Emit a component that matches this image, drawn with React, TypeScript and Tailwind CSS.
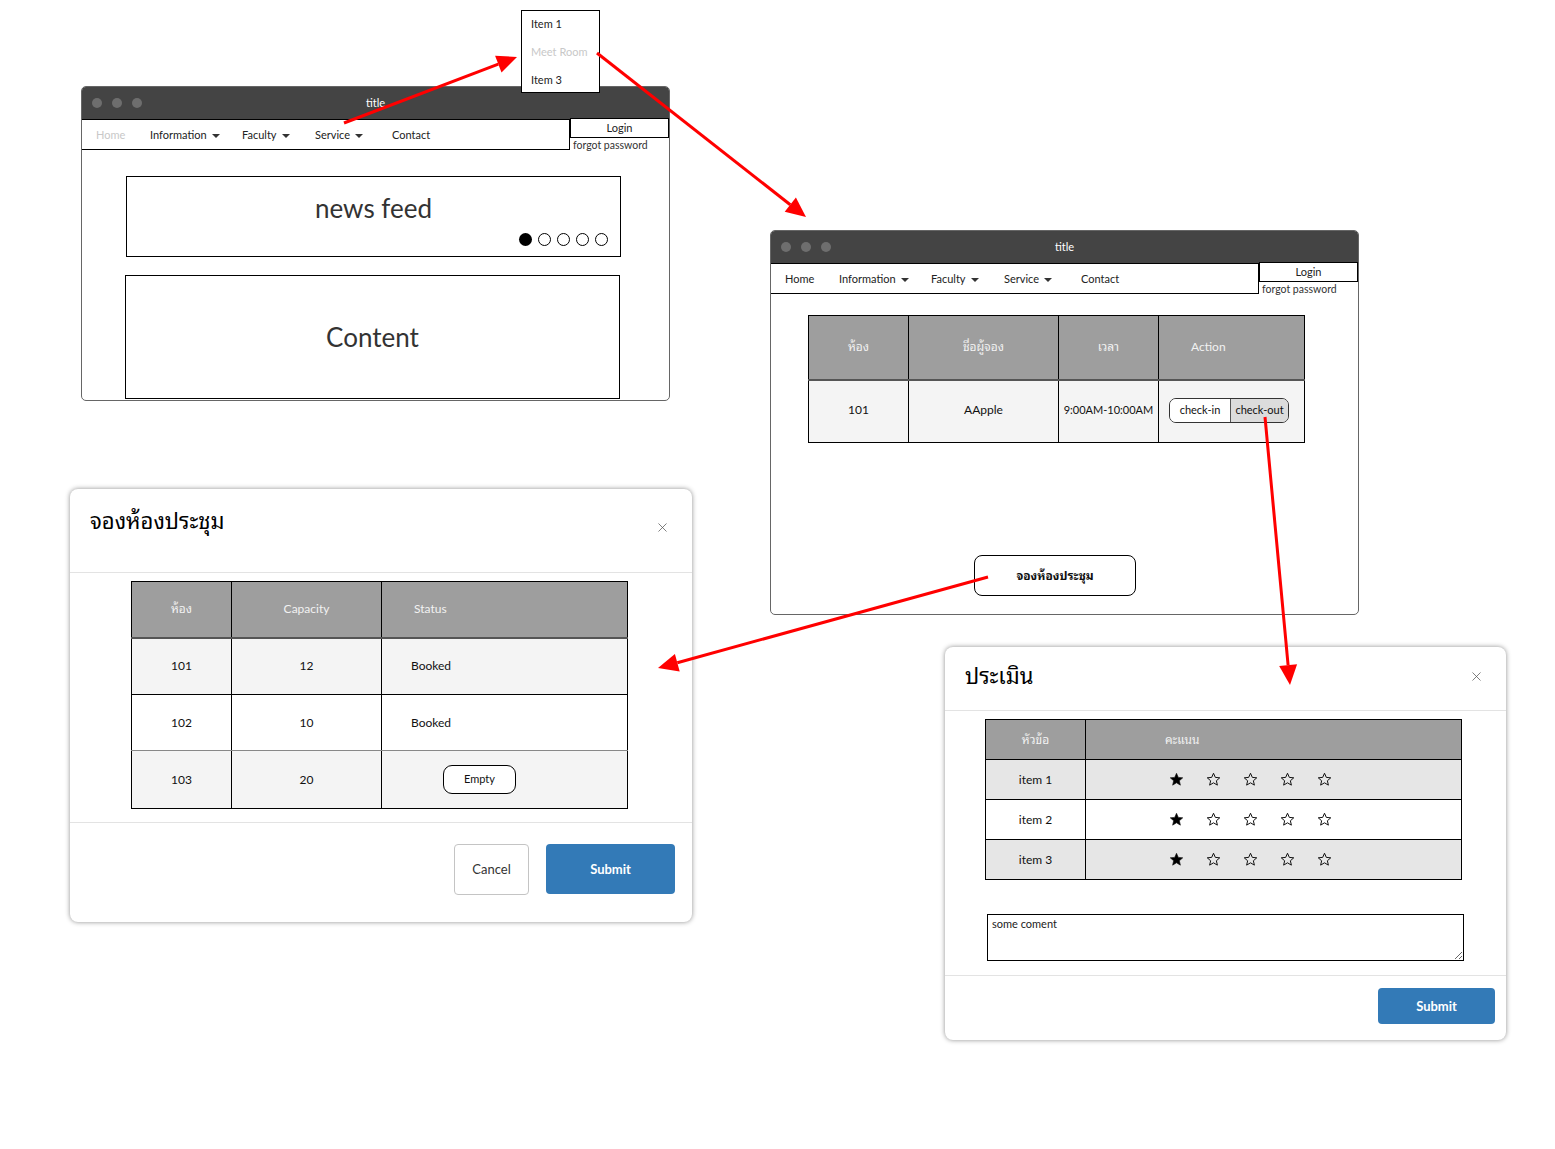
import React from "react";
import { X } from "lucide-react";

const Caret = () => (
  <span className="ml-[5px] inline-block h-0 w-0 border-x-[4px] border-t-[4px] border-x-transparent border-t-[#333] align-middle" />
);

function TitleBar() {
  return (
    <div className="grid h-[32px] shrink-0 grid-cols-[1fr_auto_1fr] items-center bg-[#444]">
      <div className="flex gap-[10px] pl-[10px]">
        <span className="h-[10px] w-[10px] rounded-full bg-[#6e6e6e]" />
        <span className="h-[10px] w-[10px] rounded-full bg-[#6e6e6e]" />
        <span className="h-[10px] w-[10px] rounded-full bg-[#6e6e6e]" />
      </div>
      <div className="text-[11px] text-white">title</div>
      <div />
    </div>
  );
}

function Nav({ homeGray }: { homeGray?: boolean }) {
  return (
    <div className="flex h-[31px] shrink-0">
      <div className="flex h-[31px] w-[488px] items-center border-y border-r border-black pl-[14px] pt-[1px] text-[11px] text-[#222]">
        <span className={"w-[54px] " + (homeGray ? "text-[#c8c8c8]" : "text-[#222]")}>Home</span>
        <span className="w-[92px]">
          Information
          <Caret />
        </span>
        <span className="w-[73px]">
          Faculty
          <Caret />
        </span>
        <span className="w-[77px]">
          Service
          <Caret />
        </span>
        <span>Contact</span>
      </div>
      <div className="-mt-[1px] flex h-[31px] w-[99px] flex-col">
        <div className="flex h-[20px] shrink-0 items-center justify-center border border-black text-[11px] text-[#222]">Login</div>
        <div className="shrink-0 whitespace-nowrap pl-[3px] text-[10.5px] leading-[15px] text-[#333]">forgot password</div>
      </div>
    </div>
  );
}

function Star({ filled }: { filled?: boolean }) {
  return (
    <svg width="15" height="15" viewBox="0 0 24 24">
      <polygon
        points="12,2 14.9,8.6 22,9.3 16.6,14 18.2,21 12,17.3 5.8,21 7.4,14 2,9.3 9.1,8.6"
        fill={filled ? "#000" : "none"}
        stroke="#111"
        strokeWidth={filled ? 1 : 1.6}
        strokeLinejoin="round"
      />
    </svg>
  );
}

function Modal({
  left,
  top,
  width,
  height,
  title,
  headerH,
  titlePt,
  xMt,
  children,
}: {
  left: string;
  top: string;
  width: string;
  height: string;
  title: string;
  headerH: string;
  titlePt: string;
  xMt: string;
  children: React.ReactNode;
}) {
  return (
    <div
      className={
        "absolute flex flex-col rounded-[8px] bg-white shadow-[0_0_5px_rgba(0,0,0,0.45)] " +
        left +
        " " +
        top +
        " " +
        width +
        " " +
        height
      }
    >
      <div className={"flex shrink-0 items-start justify-between border-b border-[#e3e3e3] pl-[20px] pr-[22px] " + headerH + " " + titlePt}>
        <div className="text-[22px] leading-[26px] text-black">{title}</div>
        <X size={15} strokeWidth={1.2} className={"text-[#555] " + xMt} />
      </div>
      {children}
    </div>
  );
}

export default function App() {
  return (
    <div className="relative h-[1149px] w-[1555px] overflow-hidden bg-white font-[family-name:Lato,'Noto_Sans_Thai_Looped','Tlwg_Typo','Garuda','Loma','Noto_Sans_Thai','Noto_Sans',sans-serif] text-[#111]">
      {/* Window 1 */}
      <div className="absolute left-[81px] top-[86px] flex h-[315px] w-[589px] flex-col overflow-hidden rounded-[5px] border border-[#666] bg-white">
        <TitleBar />
        <Nav homeGray />
        <div className="flex flex-col pl-[44px] pt-[26px]">
          <div className="flex h-[81px] w-[495px] flex-col border border-black">
            <div className="pt-[15px] text-center text-[26px] leading-[32px] text-[#333]">news feed</div>
            <div className="mt-[9px] flex justify-end gap-[6px] pr-[12px]">
              <span className="h-[13px] w-[13px] rounded-full bg-black" />
              <span className="h-[13px] w-[13px] rounded-full border border-black" />
              <span className="h-[13px] w-[13px] rounded-full border border-black" />
              <span className="h-[13px] w-[13px] rounded-full border border-black" />
              <span className="h-[13px] w-[13px] rounded-full border border-black" />
            </div>
          </div>
          <div className="-ml-[1px] mt-[18px] flex h-[124px] w-[495px] items-center justify-center border border-black text-[26px] text-[#333]">
            Content
          </div>
        </div>
      </div>

      {/* Dropdown menu */}
      <div className="absolute left-[521px] top-[10px] flex h-[83px] w-[79px] flex-col overflow-visible border border-black bg-white pl-[9px] text-[11px]">
        <div className="-mt-[1px] flex h-[28px] shrink-0 items-center text-[#222]">Item 1</div>
        <div className="flex h-[28px] shrink-0 items-center text-[#c8c8c8]">Meet Room</div>
        <div className="flex h-[28px] shrink-0 items-center text-[#222]">Item 3</div>
      </div>

      {/* Window 2 */}
      <div className="absolute left-[770px] top-[230px] flex h-[385px] w-[589px] flex-col overflow-hidden rounded-[5px] border border-[#666] bg-white">
        <TitleBar />
        <Nav />
        <div className="flex flex-col pl-[37px] pt-[21px]">
          <table className="w-[497px] border-collapse text-[12px]">
            <thead>
              <tr className="h-[64px] bg-[#9e9e9e] text-[#f2f2f2]">
                <th className="w-[100px] border border-black border-b-2 border-b-[#555] text-center font-normal">ห้อง</th>
                <th className="w-[150px] border border-black border-b-2 border-b-[#555] text-center font-normal">ชื่อผู้จอง</th>
                <th className="w-[100px] border border-black border-b-2 border-b-[#555] text-center font-normal">เวลา</th>
                <th className="border border-black border-b-2 border-b-[#555] pl-[32px] text-left font-normal">Action</th>
              </tr>
            </thead>
            <tbody>
              <tr className="h-[63px] bg-[#f4f4f4]">
                <td className="border border-black pb-[2px] text-center">101</td>
                <td className="border border-black pb-[2px] text-center">AApple</td>
                <td className="whitespace-nowrap border border-black pb-[2px] text-center text-[11px]">9:00AM-10:00AM</td>
                <td className="border border-black pb-[2px] pl-[10px]">
                  <div className="flex h-[25px] w-[120px] overflow-hidden rounded-[7px] border border-[#333] text-[11px]">
                    <div className="flex w-[60px] items-center justify-center bg-white">check-in</div>
                    <div className="flex flex-1 items-center justify-center border-l border-[#555] bg-[#dcdcdc]">check-out</div>
                  </div>
                </td>
              </tr>
            </tbody>
          </table>
          <div className="ml-[166px] mt-[112px] flex h-[41px] w-[162px] items-center justify-center rounded-[8px] border border-black text-[12px] font-bold">
            จองห้องประชุม
          </div>
        </div>
      </div>

      {/* Modal 1 */}
      <Modal
        left="left-[70px]"
        top="top-[489px]"
        width="w-[622px]"
        height="h-[433px]"
        title="จองห้องประชุม"
        headerH="h-[84px]"
        titlePt="pt-[19px]"
        xMt="mt-[12px]"
      >
        <div className="flex border-b border-[#e3e3e3] pb-[13px] pl-[61px] pt-[8px]">
          <table className="w-[497px] border-collapse text-[12px]">
            <thead>
              <tr className="h-[56px] bg-[#9e9e9e] text-[#f2f2f2]">
                <th className="w-[100px] border border-black border-b-2 border-b-[#555] text-center font-normal">ห้อง</th>
                <th className="w-[150px] border border-black border-b-2 border-b-[#555] text-center font-normal">Capacity</th>
                <th className="border border-black border-b-2 border-b-[#555] pl-[32px] text-left font-normal">Status</th>
              </tr>
            </thead>
            <tbody>
              <tr className="h-[57px] bg-[#f4f4f4]">
                <td className="border border-black text-center">101</td>
                <td className="border border-black text-center">12</td>
                <td className="border border-black pl-[29px]">Booked</td>
              </tr>
              <tr className="h-[56px] bg-white">
                <td className="border border-black border-b-[#888] text-center">102</td>
                <td className="border border-black border-b-[#888] text-center">10</td>
                <td className="border border-black border-b-[#888] pl-[29px]">Booked</td>
              </tr>
              <tr className="h-[58px] bg-[#f4f4f4]">
                <td className="border border-black text-center">103</td>
                <td className="border border-black text-center">20</td>
                <td className="border border-black pl-[61px]">
                  <div className="flex h-[29px] w-[73px] items-center justify-center rounded-[9px] border border-black bg-white text-[11px]">
                    Empty
                  </div>
                </td>
              </tr>
            </tbody>
          </table>
        </div>
        <div className="flex justify-end gap-[17px] pr-[17px] pt-[21px]">
          <div className="flex h-[51px] w-[75px] items-center justify-center rounded-[4px] border border-[#c4c4c4] text-[13px] text-[#333]">
            Cancel
          </div>
          <div className="flex h-[50px] w-[129px] items-center justify-center rounded-[4px] bg-[#337ab7] pt-[2px] text-[13px] font-bold text-white">
            Submit
          </div>
        </div>
      </Modal>

      {/* Modal 2 */}
      <Modal
        left="left-[945px]"
        top="top-[647px]"
        width="w-[561px]"
        height="h-[393px]"
        title="ประเมิน"
        headerH="h-[64px]"
        titlePt="pt-[16px]"
        xMt="mt-[6px]"
      >
        <div className="flex flex-col border-b border-[#e3e3e3] pb-[14px] pl-[40px] pt-[8px]">
          <table className="w-[477px] border-collapse text-[12px]">
            <thead>
              <tr className="h-[40px] bg-[#9e9e9e] text-[#f2f2f2]">
                <th className="w-[100px] border border-black text-center font-normal">หัวข้อ</th>
                <th className="border border-black pl-[79px] text-left font-normal">คะแนน</th>
              </tr>
            </thead>
            <tbody>
              {["item 1", "item 2", "item 3"].map((it, i) => (
                <tr key={it} className={"h-[40px] " + (i === 1 ? "bg-white" : "bg-[#e6e6e6]")}>
                  <td className="border border-black text-center">{it}</td>
                  <td className="border border-black pl-[83px]">
                    <div className="flex items-center gap-[22px]">
                      <Star filled />
                      <Star />
                      <Star />
                      <Star />
                      <Star />
                    </div>
                  </td>
                </tr>
              ))}
            </tbody>
          </table>
          <textarea
            defaultValue="some coment"
            className="ml-[2px] mt-[34px] h-[47px] w-[477px] border border-black px-[4px] py-[1px] text-[11px] leading-[15px] text-[#222] outline-none"
          />
        </div>
        <div className="flex justify-end pr-[11px] pt-[12px]">
          <div className="flex h-[36px] w-[117px] items-center justify-center rounded-[4px] bg-[#337ab7] pt-[2px] text-[13px] font-bold text-white">
            Submit
          </div>
        </div>
      </Modal>

      {/* Arrows */}
      <svg className="pointer-events-none absolute left-0 top-0" width="1555" height="1149">
        <g stroke="#f00" strokeWidth="3" fill="none">
          <line x1="344" y1="123" x2="498.3" y2="64.1" />
          <line x1="597" y1="53" x2="790.3" y2="204.7" />
          <line x1="988" y1="577" x2="677.3" y2="662.7" />
          <line x1="1265" y1="417" x2="1288.1" y2="665.1" />
        </g>
        <g fill="#f00">
          <polygon points="517,57 501.5,72.5 495.1,55.7" />
          <polygon points="806,217 784.7,211.8 795.9,197.6" />
          <polygon points="658,668 674.9,654 679.7,671.4" />
          <polygon points="1290,685 1279.2,665.9 1297.1,664.3" />
        </g>
      </svg>
    </div>
  );
}
